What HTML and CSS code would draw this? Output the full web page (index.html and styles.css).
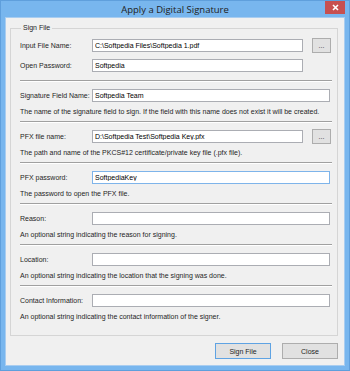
FILE: index.html
```html
<!DOCTYPE html>
<html lang="en">
<head>
    <meta charset="UTF-8">
    <title>Apply a Digital Signature</title>
    <link rel="stylesheet" href="styles.css">
</head>
<body>

    <div class="window">
        <!-- title bar -->
        <div class="titlebar">
            <span></span>
            <div class="title">Apply a Digital Signature</div>
            <div class="close">
                <svg width="7" height="7" viewBox="0 0 7 7"><path d="M1 1L6 6M6 1L1 6" stroke="#fff" stroke-width="1.6"/></svg>
            </div>
        </div>

        <div class="client">
            <fieldset class="group">
                <legend>Sign File</legend>

                <div class="section first">
                    <div class="row">
                        <label>Input File Name:</label>
                        <input class="field short" value="C:\Softpedia Files\Softpedia 1.pdf">
                        <button class="browse">...</button>
                    </div>
                    <div class="row">
                        <label>Open Password:</label>
                        <input class="field short" value="Softpedia">
                    </div>
                </div>

                <div class="section">
                    <div class="row">
                        <label>Signature Field Name:</label>
                        <input class="field" value="Softpedia Team">
                    </div>
                    <p class="hint">The name of the signature field to sign. If the field with this name does not exist it will be created.</p>
                </div>

                <div class="section">
                    <div class="row">
                        <label>PFX file name:</label>
                        <input class="field short" value="D:\Softpedia Test\Softpedia Key.pfx">
                        <button class="browse">...</button>
                    </div>
                    <p class="hint">The path and name of the PKCS#12 certificate/private key file (.pfx file).</p>
                </div>

                <div class="section">
                    <div class="row">
                        <label>PFX password:</label>
                        <input class="field focus" value="SoftpediaKey">
                    </div>
                    <p class="hint">The password to open the PFX file.</p>
                </div>

                <div class="section">
                    <div class="row">
                        <label>Reason:</label>
                        <input class="field" value="">
                    </div>
                    <p class="hint">An optional string indicating the reason for signing.</p>
                </div>

                <div class="section">
                    <div class="row">
                        <label>Location:</label>
                        <input class="field" value="">
                    </div>
                    <p class="hint">An optional string indicating the location that the signing was done.</p>
                </div>

                <div class="section">
                    <div class="row">
                        <label>Contact Information:</label>
                        <input class="field" value="">
                    </div>
                    <p class="hint">An optional string indicating the contact information of the signer.</p>
                </div>
            </fieldset>

            <div class="buttons">
                <button class="btn default">Sign File</button>
                <button class="btn">Close</button>
            </div>
        </div>
    </div>

</body>
</html>
```

FILE: styles.css
```css
body {
    margin: 0;
    font-family: "Liberation Sans", Arial, sans-serif;
    font-size: 7px;
    color: #1e1e1e;
}
.window {
    width: 350px;
    height: 371px;
    box-sizing: border-box;
    background-color: #78b6ee;
    border: 1px solid #5f9fdc;
    display: flex;
    flex-direction: column;
}
.titlebar {
    height: 17px;
    display: grid;
    grid-template-columns: 1fr auto 1fr;
    align-items: start;
}
.title {
    font-family: "Open Sans", "Noto Sans", sans-serif;
    font-size: 9.5px;
    line-height: 14px;
    padding-top: 2px;
    color: #222;
}
.close {
    justify-self: end;
    margin-right: 4px;
    width: 20px;
    height: 13px;
    background-color: #c75050;
    display: flex;
    align-items: center;
    justify-content: center;
}
.client {
    flex: 1;
    margin: 0 4px 4px 4px;
    background-color: #f0f0f0;
    border: 1px solid #a9cdf0;
    padding: 5px 6px 6px 4px;
    display: flex;
    flex-direction: column;
}
.group {
    margin: 0;
    border: 1px solid #d5d5d5;
    padding: 6px 5px 9px 9px;
}
.group legend {
    font-size: 7px;
    line-height: 10px;
    padding: 0 2px;
    margin-left: 1px;
}
.section {
    border-top: 1px solid #a0a0a0;
    box-shadow: inset 0 1px #fff;
    padding: 8px 0 4px 0;
}
.section.first {
    border-top: none;
    box-shadow: none;
    padding: 0 0 8px 0;
    display: flex;
    flex-direction: column;
    gap: 7px;
}
.row {
    display: flex;
    align-items: center;
    height: 13px;
}
.row label {
    width: 72px;
    flex: none;
}
.field {
    box-sizing: border-box;
    width: 238px;
    height: 13px;
    margin: 0;
    padding: 0 2px;
    border: 1px solid #abadb3;
    background: #fff;
    font-family: inherit;
    font-size: 7px;
    color: #000;
    outline: none;
}
.field.short {
    width: 211px;
}
.field.focus {
    border-color: #7eb4ea;
}
.browse {
    box-sizing: border-box;
    margin-left: 9px;
    width: 19px;
    height: 15px;
    padding: 0;
    border: 1px solid #adadad;
    background: #e1e1e1;
    font-family: inherit;
    font-size: 7px;
    color: #333;
}
.hint {
    margin: 4px 0 0 0;
    line-height: 11px;
}
.buttons {
    display: flex;
    justify-content: flex-end;
    gap: 11px;
    margin-top: 7px;
}
.btn {
    box-sizing: border-box;
    width: 56px;
    height: 16px;
    padding: 0;
    border: 1px solid #adadad;
    background: #e1e1e1;
    font-family: inherit;
    font-size: 7px;
    color: #1e1e1e;
}
.btn.default {
    border-color: #5fa3e3;
}
```
